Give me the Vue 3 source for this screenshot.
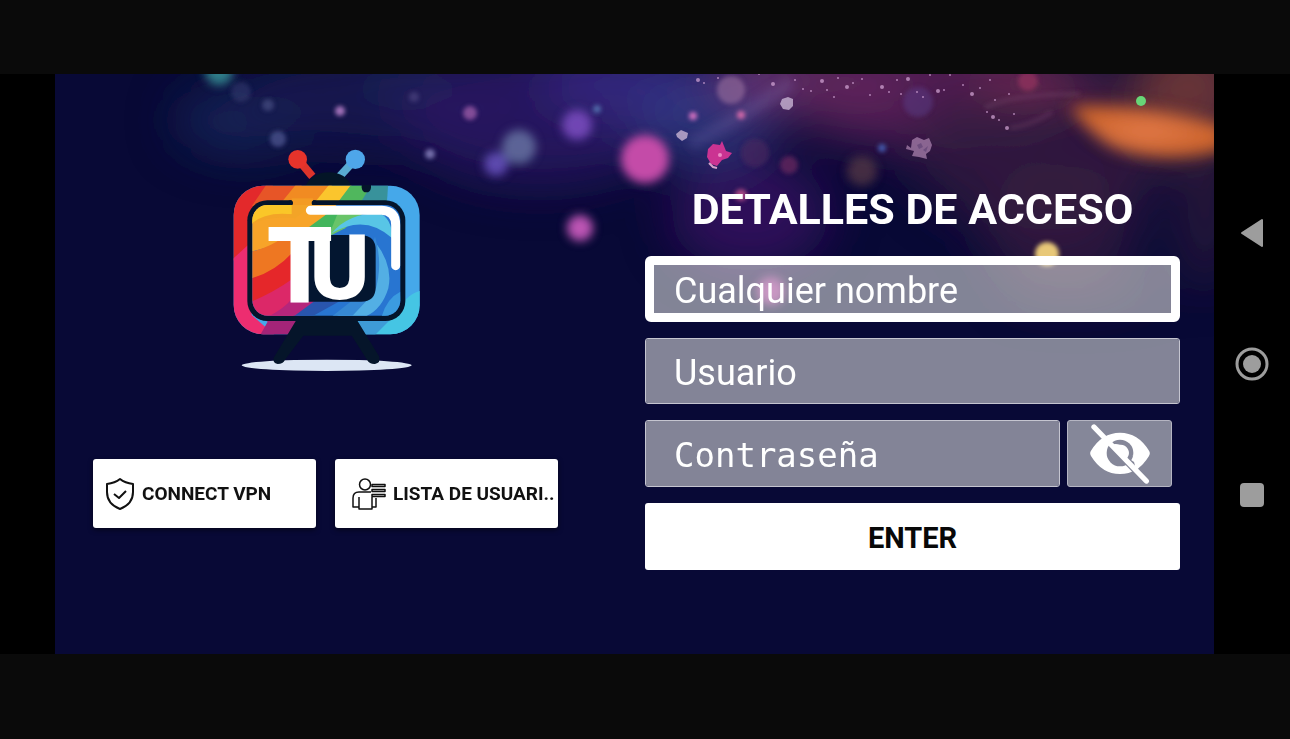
<script setup>
import { ref } from 'vue'

const name = ref('')
const user = ref('')
const password = ref('')
const showPassword = ref(false)

// wide colour washes behind the lights
const clouds = [
  { x: 245, y: 120, rx: 70, ry: 34, color: '#202c64', o: 0.7 },
  { x: 380, y: 100, rx: 150, ry: 50, color: '#161850', o: 0.9 },
  { x: 440, y: 80, rx: 80, ry: 20, color: '#1e2c60', o: 0.7 },
  { x: 540, y: 115, rx: 140, ry: 70, color: '#2a1960', o: 0.9 },
  { x: 630, y: 80, rx: 90, ry: 40, color: '#3a2884', o: 0.8 },
  { x: 705, y: 120, rx: 70, ry: 46, color: '#34408c', o: 0.7 },
  { x: 750, y: 215, rx: 80, ry: 56, color: '#400f6a', o: 0.7 },
  { x: 810, y: 80, rx: 100, ry: 34, color: '#743a7a', o: 0.9 },
  { x: 930, y: 90, rx: 150, ry: 60, color: '#5e2258', o: 0.85 },
  { x: 1040, y: 150, rx: 130, ry: 80, color: '#32193f', o: 0.8 },
  { x: 1060, y: 225, rx: 80, ry: 60, color: '#402040', o: 0.6 },
  { x: 1040, y: 80, rx: 70, ry: 12, color: '#9c3a5c', o: 0.7 },
  { x: 1190, y: 90, rx: 60, ry: 60, color: '#803e38', o: 0.8 },
  { x: 1205, y: 200, rx: 20, ry: 90, color: '#4c243c', o: 0.6 },
  { x: 1080, y: 290, rx: 80, ry: 12, color: '#5c3048', o: 0.3 }
]

const bigLights = [
  { x: 219, y: 71, r: 14, color: '#3a9a9c', o: 0.8 },
  { x: 519, y: 147, r: 17, color: '#7484b0', o: 0.7 },
  { x: 496, y: 164, r: 12, color: '#6450b8', o: 0.9 },
  { x: 577, y: 125, r: 15, color: '#784abc', o: 0.9 },
  { x: 645, y: 159, r: 24, color: '#c44ca8', o: 1 },
  { x: 580, y: 228, r: 13, color: '#bc54b4', o: 1 },
  { x: 862, y: 171, r: 15, color: '#5a3a46', o: 0.7 },
  { x: 771, y: 291, r: 14, color: '#b838a4', o: 0.8 }
]

const lights = [
  { x: 241, y: 92, r: 10, color: '#474b80', o: 0.4 },
  { x: 268, y: 105, r: 6, color: '#50558a', o: 0.6 },
  { x: 278, y: 139, r: 8, color: '#525894', o: 0.7 },
  { x: 340, y: 111, r: 5, color: '#b07ac4', o: 0.9 },
  { x: 414, y: 97, r: 5, color: '#5e5490', o: 0.5 },
  { x: 430, y: 154, r: 5, color: '#7d78b4', o: 0.9 },
  { x: 470, y: 113, r: 7, color: '#9a5aa6', o: 0.8 },
  { x: 597, y: 109, r: 4, color: '#5878b4', o: 0.8 },
  { x: 731, y: 90, r: 14, color: '#9a709e', o: 0.6 },
  { x: 693, y: 116, r: 4, color: '#d070c0', o: 1 },
  { x: 741, y: 115, r: 4, color: '#d068a8', o: 1 },
  { x: 755, y: 153, r: 14, color: '#54285f', o: 0.5 },
  { x: 789, y: 165, r: 9, color: '#6c2860', o: 0.7 },
  { x: 741, y: 195, r: 6, color: '#b44c88', o: 0.9 },
  { x: 882, y: 148, r: 4, color: '#4868c0', o: 0.8 },
  { x: 918, y: 102, r: 15, color: '#5a3c88', o: 0.5 },
  { x: 1028, y: 81, r: 10, color: '#b03866', o: 0.5 },
  { x: 1047, y: 254, r: 12, color: '#e8c878', o: 1 }
]

const sparks = [
  [698, 80], [704, 83], [718, 78], [759, 74], [773, 84], [795, 80],
  [803, 89], [811, 91], [822, 81], [827, 90], [834, 97], [838, 78], [847, 87],
  [853, 83], [862, 79], [870, 95], [882, 87], [889, 92], [897, 80], [901, 94],
  [908, 79], [917, 92], [923, 97], [930, 75], [938, 91], [944, 90], [950, 75],
  [963, 85], [972, 94], [980, 88], [990, 80], [987, 112], [993, 117],
  [999, 120], [995, 100], [1009, 94], [1007, 128], [1014, 114]
]
</script>

<template>
  <div class="screen">
    <div class="device">
      <main class="panel">
        <svg class="backdrop" viewBox="55 74 1159 580" preserveAspectRatio="xMidYMin slice" aria-hidden="true">
          <defs>
            <filter id="haze" x="-60%" y="-100%" width="220%" height="300%"><feGaussianBlur stdDeviation="24" /></filter>
            <filter id="glow" x="-50%" y="-50%" width="200%" height="200%"><feGaussianBlur stdDeviation="5" /></filter>
            <filter id="soft" x="-50%" y="-50%" width="200%" height="200%"><feGaussianBlur stdDeviation="2" /></filter>
            <filter id="flare" x="-30%" y="-50%" width="160%" height="200%"><feGaussianBlur stdDeviation="8" /></filter>
            <radialGradient id="orange"><stop offset="0" stop-color="#e07848" /><stop offset="1" stop-color="#cc632b" /></radialGradient>
          </defs>
          <g filter="url(#haze)">
            <ellipse v-for="(c, i) in clouds" :key="i" :cx="c.x" :cy="c.y" :rx="c.rx" :ry="c.ry" :fill="c.color" :opacity="c.o" />
          </g>
          <path d="M1070 106C1110 103 1160 108 1225 126V149C1190 160 1140 160 1110 146C1092 134 1080 122 1070 106Z" fill="url(#orange)" filter="url(#flare)" />
          <g filter="url(#glow)">
            <path d="M690 144Q735 122 792 82" fill="none" stroke="#8c7bc0" stroke-width="14" opacity=".2" />
            <circle v-for="(l, i) in bigLights" :key="i" :cx="l.x" :cy="l.y" :r="l.r" :fill="l.color" :opacity="l.o" />
          </g>
          <g filter="url(#soft)">
            <path d="M1010 128Q1030 126 1052 112M985 108Q1010 94 1080 94" fill="none" stroke="#8c5a80" stroke-width="4" opacity=".25" />
            <circle v-for="(l, i) in lights" :key="i" :cx="l.x" :cy="l.y" :r="l.r" :fill="l.color" :opacity="l.o" />
          </g>
          <g fill="#d6a8d8">
            <circle v-for="([x, y], i) in sparks" :key="i" :cx="x" :cy="y" :r="i % 4 ? 1 : 2" opacity=".7" />
          </g>
          <g fill="#c8b4d4" opacity=".8">
            <path d="M780 104L782 99 788 97 793 99 793 106 789 110 783 109Z" />
            <path d="M676 134L681 130 688 133 687 138 682 141 677 137Z" />
            <path d="M906 149L907 145 911 148 912 140 917 137 924 140 929 138 932 145 930 151 926 154 927 159 919 157 912 156 914 151Z" fill="#a07aa6" />
            <path d="M917 145L921 143 923 147 919 149ZM923 150L928 146 926 152Z" fill="#7e5d8e" />
          </g>
          <path d="M708 149L713 144 720 145 722 141 724 146 726 151 732 153 728 158 722 160 717 166 711 164 707 157Z" fill="#cb3392" />
          <path d="M709 163L713 167 717 168" fill="none" stroke="#d7a2ca" stroke-width="2" />
          <circle cx="720" cy="155" r="2" fill="#ec8bc6" />
          <circle cx="1141" cy="101" r="5" fill="#68d577" />
        </svg>

        <section class="brand">
          <svg class="logo" viewBox="-6 0 675 750" role="img" aria-label="TU">
            <defs>
              <clipPath id="frame"><rect x="56" y="152" width="558" height="446" rx="88" /></clipPath>
              <clipPath id="tube"><rect x="112" y="210" width="444" height="332" rx="46" /></clipPath>
            </defs>
            <ellipse cx="335" cy="691" rx="255" ry="17" fill="#dce6f4" />
            <path d="M262 88L292 124" stroke="#dc342b" stroke-width="24" />
            <circle cx="248" cy="73" r="28" fill="#e6332b" />
            <path d="M407 88L374 124" stroke="#59abd2" stroke-width="24" />
            <circle cx="421" cy="73" r="29" fill="#4ea6ea" />
            <path d="M270 156Q290 113 342 112Q394 113 410 156Z" fill="#031527" />
            <g clip-path="url(#frame)">
              <path d="M50 140H630V610H50Z" fill="#45a8ea" />
              <path d="M50 140H180L128 230 104 340 50 380Z" fill="#e3292b" />
              <path d="M160 140H270L205 214H110Z" fill="#e75527" />
              <path d="M250 140H360L300 214H190Z" fill="#f18b22" />
              <path d="M350 140H418L360 214H290Z" fill="#fbc52d" />
              <path d="M415 140H475L440 214H360Z" fill="#50b75d" />
              <path d="M475 140H520L515 214H430Z" fill="#38929b" />
              <path d="M50 375L110 320V540L190 610H50Z" fill="#ed2d70" />
              <path d="M110 530L158 560 130 610H260V530Z" fill="#a42478" />
              <path d="M614 468Q570 480 540 540L430 540V610H630V468Z" fill="#45c5e4" />
              <path d="M430 550H530L470 610H430Z" fill="#3e9bd7" />
            </g>
            <rect x="97" y="196" width="474" height="362" rx="60" fill="#04142b" />
            <path d="M230 190H294V214H230Z" fill="#f39b24" />
            <circle cx="226" cy="204" r="8" fill="#04142b" />
            <circle cx="298" cy="204" r="8" fill="#04142b" />
            <path d="M440 150H468V158Q466 172 454 172Q442 172 440 158Z" fill="#04142b" />
            <g clip-path="url(#tube)">
              <path d="M110 205H560V545H110Z" fill="#2875d1" />
              <path d="M110 205H370L260 310 110 350Z" fill="#f7a429" />
              <path d="M110 205H232V238Q160 238 110 266Z" fill="#fac628" />
              <path d="M230 205H300L240 250Q170 240 110 266Q150 230 230 238Z" fill="#f3a427" />
              <path d="M110 350Q190 330 235 280V370Q175 420 110 430Z" fill="#ee7722" />
              <path d="M110 430Q180 410 235 350V450Q175 480 110 500Z" fill="#e5272a" />
              <path d="M110 500Q180 470 235 430V545H110Z" fill="#dc2868" />
              <path d="M160 545Q225 510 235 480H320L250 545Z" fill="#b5267b" />
              <path d="M270 285L345 230H420L340 300Z" fill="#43b55c" />
              <path d="M370 230H450L390 280 340 305Z" fill="#69c469" />
              <path d="M350 295Q400 235 490 235Q530 245 532 310Q450 235 350 295Z" fill="#58c5e6" />
              <path d="M480 320Q535 390 520 460Q500 525 450 545H360Q450 510 480 460Z" fill="#53afe4" />
              <path d="M480 305Q505 390 480 470L410 545H350L420 490Z" fill="#3688d4" />
              <path d="M235 545L310 490H390L290 545Z" fill="#2955ad" />
              <path d="M556 470Q515 490 500 545H560Z" fill="#3b9be0" />
            </g>
            <path d="M286 226H500Q542 228 542 270V392" fill="none" stroke="#fff" stroke-width="27" stroke-linecap="round" />
            <path d="M279 300H438Q482 302 482 345V456Q482 500 438 500H279Z" fill="#031630" />
            <text class="logo-text" y="500" font-size="315"><tspan x="155">T</tspan><tspan x="284" y="492" font-size="270">U</tspan></text>
            <path d="M244 555H426L492 664Q498 684 480 687Q464 688 456 674L410 602H265L210 674Q204 687 188 687Q172 684 176 668Z" fill="#05152a" />
          </svg>
          <div class="shortcuts">
            <button type="button" class="shortcut">
              <svg class="shield" viewBox="0 0 30 34" aria-hidden="true">
                <path d="M15 2Q10 6 2 7V15Q2 27 15 32Q28 27 28 15V7Q20 6 15 2Z" />
                <path d="M9 17L14 21 21 14" />
              </svg>
              <span>CONNECT VPN</span>
            </button>
            <button type="button" class="shortcut users">
              <svg class="person" viewBox="0 0 34 32" aria-hidden="true">
                <circle cx="13" cy="6.5" r="5.5" />
                <path d="M7 19V31H20V19M7 29H1V20Q1 14 7 14H19M20 29H24V20M20 6.5H33V8.5H20ZM20 11.5H33V13.5H20ZM20 16.5H33V18.5H20Z" />
              </svg>
              <span>LISTA DE USUARI..</span>
            </button>
          </div>
        </section>

        <form class="access" @submit.prevent>
          <h1>DETALLES DE ACCESO</h1>
          <input v-model="name" class="field active" type="text" placeholder="Cualquier nombre" aria-label="Cualquier nombre">
          <input v-model="user" class="field" type="text" placeholder="Usuario" aria-label="Usuario">
          <div class="password-row">
            <input v-model="password" class="field mono" :type="showPassword ? 'text' : 'password'" placeholder="Contraseña" aria-label="Contraseña">
            <button type="button" class="reveal" aria-label="Mostrar contraseña" @click="showPassword = !showPassword">
              <svg viewBox="0 0 180 192" aria-hidden="true">
                <path d="M3 86Q36 32 90 32Q144 32 177 86Q182 94 177 102Q144 156 90 156Q36 156 3 102Q-2 94 3 86Z" fill="#fff" />
                <circle cx="90" cy="93" r="40" fill="#858799" />
                <path d="M66 68Q76 64 90 68A25 25 0 0 1 113 106L108 112Z" fill="#fff" />
                <path d="M104 126L150 174 178 170 150 132 120 112Z" fill="#858799" />
                <path d="M138 146L160 124 128 100Z" fill="#fff" />
                <path d="M12 15L169 177" stroke="#fff" stroke-width="16" stroke-linecap="round" />
              </svg>
            </button>
          </div>
          <button type="submit" class="enter">ENTER</button>
        </form>
      </main>

      <nav class="system-nav" aria-label="Navegación">
        <button type="button" aria-label="Atrás">
          <svg viewBox="0 0 34 34"><path d="M7 17L27 4V30Z" stroke="#9d9d9d" stroke-width="2" stroke-linejoin="round" /></svg>
        </button>
        <button type="button" aria-label="Inicio">
          <svg viewBox="0 0 34 34"><circle cx="17" cy="17" r="15" fill="none" stroke="#9d9d9d" stroke-width="3" /><circle cx="17" cy="17" r="9" /></svg>
        </button>
        <button type="button" aria-label="Recientes">
          <svg viewBox="0 0 34 34"><rect x="5" y="5" width="24" height="24" rx="4" /></svg>
        </button>
      </nav>
    </div>
  </div>
</template>

<style>
body {
  margin: 0;
  background: #0a0a0a;
}
</style>

<style scoped>
* { box-sizing: border-box; }

.screen {
  min-height: 100vh;
  padding: 74px 0 84px;
  background: #0a0a0a;
  font-family: Roboto, "Liberation Sans", sans-serif;
}

.device {
  display: grid;
  grid-template-columns: minmax(0, 1fr) 76px;
  padding-left: 55px;
  background: #000;
}

.panel {
  position: relative;
  display: grid;
  grid-template-columns: minmax(0, 465fr) minmax(0, 535fr);
  column-gap: 87px;
  padding: 61px 34px 84px 38px;
  background: #080936;
  overflow: hidden;
}

.backdrop {
  position: absolute;
  inset: 0;
  width: 100%;
  height: 100%;
}

.brand, .access { position: relative; }

.brand {
  display: flex;
  flex-direction: column;
  align-items: center;
  gap: 74px;
}

.logo {
  width: 225px;
  height: 250px;
}

.logo-text {
  font-family: Roboto, sans-serif;
  font-weight: 900;
  fill: #fff;
}

button {
  font: inherit;
  cursor: pointer;
}

.shortcuts {
  display: grid;
  grid-template-columns: 1fr 1fr;
  gap: 19px;
  width: 100%;
}

.shortcut {
  display: flex;
  align-items: center;
  gap: 7px;
  min-width: 0;
  height: 69px;
  padding: 0 0 0 12px;
  border: 0;
  border-radius: 3px;
  background: #fff;
  color: #111;
  font-size: 19px;
  font-weight: 700;
  white-space: nowrap;
  overflow: hidden;
  box-shadow: 0 2px 5px rgba(0, 0, 0, 0.5);
}

.shortcut.users { padding-left: 17px; }

.shortcut svg {
  flex: none;
  fill: none;
  stroke: #111;
  stroke-width: 2;
  stroke-linejoin: round;
}

.shield { width: 30px; height: 34px; }
.person { width: 34px; height: 32px; }
.shortcut .person { stroke-width: 1.5; }

.access {
  display: flex;
  flex-direction: column;
  gap: 16px;
  padding-top: 48px;
}

h1 {
  margin: 0 0 5px;
  color: #fff;
  font-size: 43px;
  font-weight: 700;
  line-height: 52px;
  text-align: center;
  white-space: nowrap;
}

.field {
  width: 100%;
  height: 66px;
  padding: 3px 28px 0;
  border: 1px solid #c5c5d0;
  border-radius: 3px;
  background: rgba(253, 255, 248, 0.5);
  background-clip: padding-box;
  color: #fff;
  font-family: inherit;
  font-size: 36px;
  outline: 0;
}

.field::placeholder {
  color: #fff;
  opacity: 1;
}

.field.active {
  padding: 3px 20px 0;
  border: 9px solid #fff;
  border-radius: 6px;
}

.field.mono {
  height: 67px;
  font-family: "DejaVu Sans Mono", monospace;
  font-size: 34px;
}

.password-row {
  display: grid;
  grid-template-columns: minmax(0, 1fr) 105px;
  gap: 7px;
  padding-right: 8px;
}

.reveal {
  display: flex;
  align-items: center;
  justify-content: center;
  padding: 0;
  border: 1px solid #b5b5c2;
  border-radius: 3px;
  background: #858799;
}

.reveal svg {
  width: 60px;
  height: 64px;
}

.enter {
  height: 67px;
  padding-top: 3px;
  border: 0;
  border-radius: 3px;
  background: #fff;
  color: #080808;
  font-size: 29px;
  font-weight: 700;
}

.system-nav {
  display: flex;
  flex-direction: column;
  align-items: center;
  justify-content: center;
  gap: 97px;
}

.system-nav button {
  padding: 0;
  border: 0;
  background: none;
}

.system-nav svg {
  display: block;
  width: 34px;
  height: 34px;
  fill: #9d9d9d;
}

@media (max-width: 900px) {
  .panel { grid-template-columns: minmax(0, 1fr); }
  h1 { font-size: 32px; }
}
</style>
